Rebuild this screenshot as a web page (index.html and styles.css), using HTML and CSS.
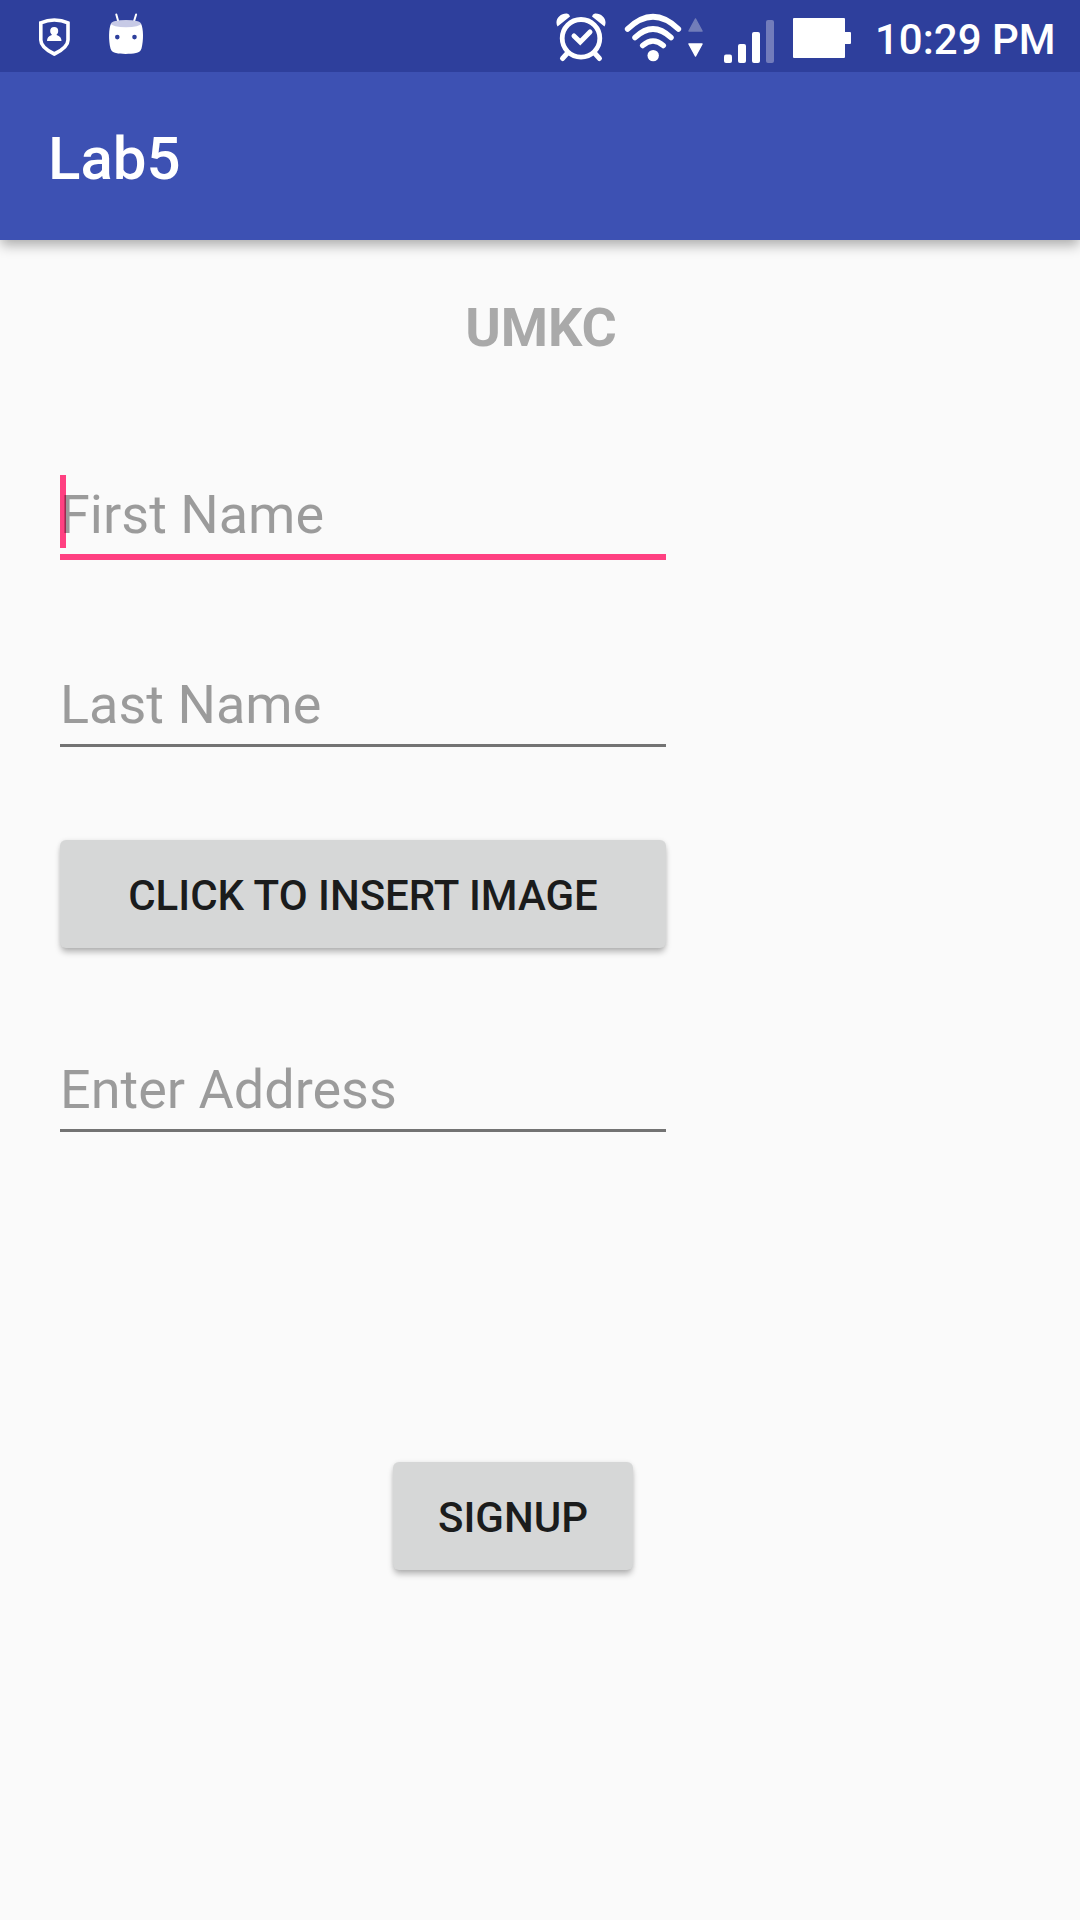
FILE: index.html
```html
<!DOCTYPE html>
<html lang="en">
<head>
<meta charset="utf-8">
<title>Lab5</title>
<link rel="stylesheet" href="styles.css">
</head>
<body>
<div class="status-bar">
  <div class="notifications">
    <svg width="40" height="72" viewBox="34 0 40 72">
      <path d="M54.3 20C50 20 45 21 40.8 22.8V40C40.8 46 48 51 54.3 54C60.6 51 68 46 68 40V22.8C64 21 59 20 54.3 20Z" fill="none" stroke="#fff" stroke-width="3.6"/>
      <circle cx="54.2" cy="31" r="4" fill="#fff"/>
      <path d="M51.8 33H56.6V35C60 36 61.5 38 61.5 41H47C47 38 48.5 36 51.8 35Z" fill="#fff"/>
    </svg>
    <svg width="40" height="72" viewBox="106 0 40 72">
      <path d="M116.3 14.5L118.7 23M136.1 14.5L133.5 23" stroke="#fff" stroke-width="2" stroke-linecap="round"/>
      <path d="M111 23.5C115 26 137 26 141 23.5C143.5 29 143.7 40 141.5 48.5C140.5 51.5 138.5 52.5 136 53C130 54.2 121 54.2 116 53C113.5 52.5 111.5 51.5 110.5 48.5C108.5 40 108.6 29 111 23.5Z" fill="#fff"/>
      <ellipse cx="126" cy="23.6" rx="15" ry="3.7" fill="#c7cae6"/>
      <circle cx="117.3" cy="37.1" r="2.3" fill="#2e3f9c"/>
      <circle cx="134.5" cy="37.1" r="2.3" fill="#2e3f9c"/>
    </svg>
  </div>
  <div class="system">
    <svg width="52" height="72" viewBox="555 0 52 72">
      <circle cx="581" cy="38.3" r="18.8" fill="none" stroke="#fff" stroke-width="4.8"/>
      <path d="M567.5 53L562.5 58.5M594.5 53L599.5 58.5" stroke="#fff" stroke-width="5" stroke-linecap="round"/>
      <path d="M574 36L580.2 42L590 32" fill="none" stroke="#fff" stroke-width="5" stroke-linecap="round" stroke-linejoin="miter"/>
      <path d="M557.5 26.500C554 20 560 13 567 13.500Q569.500 14 570 16.500ZM604.500 26.500C608 20 602 13 595 13.500Q592.500 14 592 16.500Z" fill="#fff"/>
    </svg>
    <svg class="wifi" width="80" height="72" viewBox="624 0 80 72">
      <g fill="none" stroke="#fff" stroke-width="5.5" stroke-linecap="round">
        <path d="M627.6 29Q653 4.500 678.4 29"/>
        <path d="M635 37.5Q653 20.500 671 37.5"/>
        <path d="M642.700 45.500Q653 36.500 663.300 45.500"/>
      </g>
      <circle cx="653.200" cy="55.600" r="5.700" fill="#fff"/>
      <path d="M695.500 19L702 31H689Z" fill="#727db9" stroke="#727db9" stroke-width="1.500" stroke-linejoin="round"/>
      <path d="M695.500 56L689 44H702Z" fill="#fff" stroke="#fff" stroke-width="1.500" stroke-linejoin="round"/>
    </svg>
    <svg class="signal" width="52" height="72" viewBox="723 0 52 72" fill="#fff">
      <rect x="724" y="54.5" width="8" height="8.5" rx="2"/>
      <rect x="738" y="44" width="8" height="19" rx="2"/>
      <rect x="752" y="32" width="8" height="31" rx="2"/>
      <rect x="766" y="20" width="8" height="43" rx="2" fill="#727cbb"/>
    </svg>
    <svg class="battery" width="60" height="72" viewBox="792 0 60 72">
      <path d="M794 18H844Q845 18 845 19V32H850Q851 32 851 33V43Q851 44 850 44H845V57Q845 58 844 58H794Q793 58 793 57V19Q793 18 794 18Z" fill="#fff"/>
    </svg>
    <span class="clock">10:29 PM</span>
  </div>
</div>
<header class="app-bar">Lab5</header>
<main class="form">
  <h1 class="heading">UMKC</h1>
  <div class="field field-first focused"><span class="caret"></span><span class="hint">First Name</span></div>
  <div class="field field-last"><span class="hint">Last Name</span></div>
  <button class="button button-image">CLICK TO INSERT IMAGE</button>
  <div class="field field-address"><span class="hint">Enter Address</span></div>
  <button class="button button-signup">SIGNUP</button>
</main>
</body>
</html>
```
FILE: styles.css
```css
* {
  box-sizing: border-box;
}

body {
  margin: 0;
  width: 1080px;
  height: 1920px;
  overflow: hidden;
  background: #fafafa;
  font-family: Roboto, "Noto Sans", sans-serif;
}

svg {
  display: block;
}

.status-bar {
  position: relative;
  z-index: 1;
  height: 72px;
  background: #2e3f9c;
  display: flex;
  justify-content: space-between;
  padding: 0 26px 0 34px;
}

.notifications {
  display: flex;
  gap: 32px;
}

.system {
  display: flex;
}

.wifi {
  margin-left: 17px;
}

.signal {
  margin-left: 19px;
}

.battery {
  margin-left: 17px;
}

.clock {
  width: 179px;
  margin-left: 23px;
  padding-top: 7px;
  line-height: 65px;
  font-size: 42px;
  font-weight: 500;
  color: #fff;
  white-space: nowrap;
}

.app-bar {
  position: relative;
  height: 168px;
  padding: 5px 48px 0;
  line-height: 163px;
  font-size: 60px;
  font-weight: 500;
  color: #fff;
  background: #3d51b3;
  box-shadow: 0 6px 12px -1px rgba(0, 0, 0, 0.32);
}

.form {
  display: flex;
  flex-direction: column;
  align-items: flex-start;
  padding: 56px 60px 0;
}

.heading {
  align-self: center;
  margin: 0;
  padding-left: 2px;
  line-height: 64px;
  font-size: 54px;
  font-weight: 700;
  color: #a9a9a9;
}

.field {
  position: relative;
  width: 606px;
  border-bottom: 3px solid #737373;
  line-height: 79px;
  font-size: 54px;
}

.focused {
  border-bottom: 6px solid #ff4081;
}

.hint {
  display: block;
  position: relative;
  color: rgba(0, 0, 0, 0.38);
}

.caret {
  position: absolute;
  left: 0;
  top: 0;
  width: 6px;
  height: 73px;
  background: #ff4081;
}

.field-first {
  margin-top: 115px;
}

.field-last {
  margin-top: 105px;
}

.field-address {
  margin-top: 102px;
}

.button {
  height: 108px;
  border: 0;
  border-radius: 6px;
  padding: 3px 0 0;
  background: #d6d7d7;
  color: #1b1c1c;
  font-family: inherit;
  font-size: 42px;
  font-weight: 500;
  box-shadow: 0 5px 6px -1px rgba(0, 0, 0, 0.28), 0 0 4px rgba(0, 0, 0, 0.08);
}

.button-image {
  width: 606px;
  margin-top: 93px;
}

.button-signup {
  width: 240px;
  margin: 330px 0 0 333px;
}
```
